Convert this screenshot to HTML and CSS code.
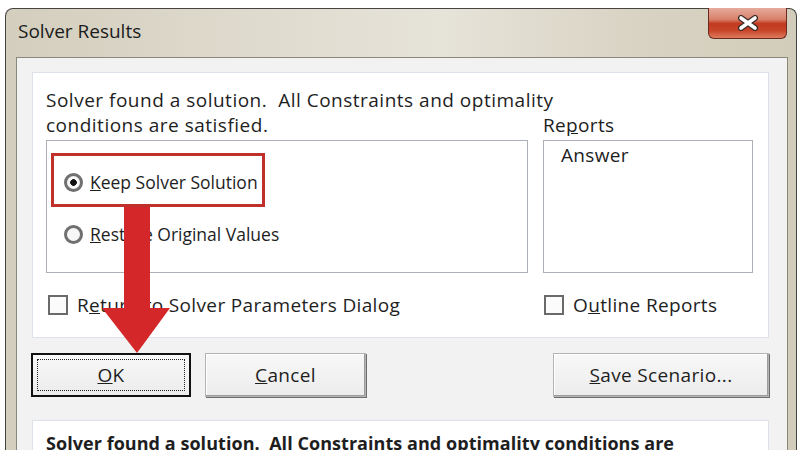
FILE: index.html
```html
<!DOCTYPE html>
<html lang="en">
<head>
<meta charset="utf-8">
<title>Solver Results</title>
<link rel="stylesheet" href="styles.css">
</head>
<body>
<div class="window">
  <div class="titlebar">
    <span class="title">Solver Results</span>
    <div class="close">
      <svg width="22" height="16" viewBox="0 0 22 16">
        <path d="M4 3 L18 13 M18 3 L4 13" stroke="#3a2a28" stroke-width="6" stroke-linecap="round"/>
        <path d="M4 3 L18 13 M18 3 L4 13" stroke="#ffffff" stroke-width="3.6" stroke-linecap="round"/>
      </svg>
    </div>
  </div>
  <div class="client">
    <div class="panel main">
      <div class="grid">
        <div class="message">Solver found a solution.&nbsp; All Constraints and optimality<br>conditions are satisfied.</div>
        <div class="reports-label">Re<u>p</u>orts</div>
        <div class="groupbox">
          <div class="highlight">
            <div class="option"><span class="radio checked"></span><span><u>K</u>eep Solver Solution</span></div>
          </div>
          <div class="option second"><span class="radio"></span><span><u>R</u>estore Original Values</span></div>
        </div>
        <div class="listbox"><div class="item">Answer</div></div>
        <div class="check left"><span class="box"></span><span>R<u>e</u>turn to Solver Parameters Dialog</span></div>
        <div class="check right"><span class="box"></span><span>O<u>u</u>tline Reports</span></div>
      </div>
    </div>
    <div class="buttons">
      <button class="btn default"><span class="focus"><u>O</u>K</span></button>
      <button class="btn cancel"><u>C</u>ancel</button>
      <button class="btn save"><u>S</u>ave Scenario...</button>
    </div>
    <div class="panel result">
      <p>Solver found a solution.&nbsp; All Constraints and optimality conditions are satisfied.</p>
    </div>
  </div>
  <svg class="arrow" width="68" height="146" viewBox="0 0 68 146">
    <rect x="22" y="0" width="26" height="102" fill="#d3272a"/>
    <polygon points="0,101 68,101 35,146" fill="#d3272a"/>
  </svg>
</div>
</body>
</html>
```
FILE: styles.css
```css
html, body {
  margin: 0;
  height: 100%;
}
body {
  background: #ffffff;
  font-family: "Open Sans", "Noto Sans", sans-serif;
  color: #1e1e1e;
  overflow: hidden;
}
.window {
  position: relative;
  box-sizing: border-box;
  margin: 8px 0 0 5px;
  width: 792px;
  height: 460px;
  padding: 0 8px 0 10px;
  border: 1px solid #45443f;
  border-bottom: none;
  border-radius: 8px 8px 0 0;
  background: linear-gradient(to right, #d3cebd 0%, #dedacd 30%, #e6e3d9 55%, #d8d3c3 80%, #d2ccba 100%);
}
.titlebar {
  height: 48px;
  display: flex;
  justify-content: space-between;
  align-items: flex-start;
}
.title {
  font-size: 19px;
  line-height: 26px;
  padding: 9px 0 0 2px;
  color: #1b1b1b;
}
.close {
  margin: -1px 1px 0 0;
  width: 79px;
  height: 31px;
  box-sizing: border-box;
  border: 1px solid #6a2a20;
  border-top: none;
  border-radius: 0 0 6px 6px;
  background: linear-gradient(to bottom, #e6ab9c 0%, #d8806a 38%, #c23a20 52%, #c8452a 75%, #de7a5c 100%);
  display: flex;
  align-items: center;
  justify-content: center;
}
.client {
  box-sizing: border-box;
  height: 420px;
  border: 1px solid #8a877d;
  border-bottom: none;
  background: #f2f2f2;
  padding: 14px 18px 0 15px;
}
.panel {
  background: #ffffff;
  border: 1px solid #dde2e8;
  box-sizing: border-box;
}
.main {
  height: 266px;
  padding: 15px 14px 0 13px;
}
.grid {
  display: grid;
  grid-template-columns: 482px 210px;
  column-gap: 15px;
  font-size: 19px;
  letter-spacing: 0.35px;
  line-height: 25px;
}
.message {
  white-space: nowrap;
  margin-bottom: 2px;
  letter-spacing: 0.5px;
}
.reports-label {
  align-self: end;
  margin-bottom: 2px;
}
.groupbox, .listbox {
  height: 133px;
  box-sizing: border-box;
  border: 1px solid #abb0b8;
}
.highlight {
  box-sizing: border-box;
  margin: 12px 0 0 4px;
  width: 214px;
  height: 54px;
  border: 3px solid #c1312c;
  padding: 4px 0 0 10px;
  display: flex;
  align-items: center;
  white-space: nowrap;
}
.option {
  display: flex;
  align-items: center;
  gap: 7px;
  white-space: nowrap;
  font-size: 17.5px;
  letter-spacing: 0;
}
.option.second {
  margin: 15px 0 0 17px;
}
.radio {
  flex: none;
  width: 19px;
  height: 19px;
  box-sizing: border-box;
  border: 3px solid #707070;
  border-radius: 50%;
  background: #f7f7f7;
}
.radio.checked {
  background: radial-gradient(circle, #111 0 3px, #f7f7f7 3.6px);
}
.listbox {
  padding: 2px 17px;
}
.check {
  display: flex;
  align-items: center;
  gap: 9px;
  margin-top: 22px;
  height: 20px;
  white-space: nowrap;
}
.check.left { margin-left: 2px; }
.check.right { margin-left: 1px; }
.box {
  flex: none;
  width: 20px;
  height: 20px;
  box-sizing: border-box;
  border: 2px solid #6a6a6a;
  background: #fbfbfb;
}
.buttons {
  display: flex;
  margin-top: 15px;
  height: 44px;
}
.btn {
  box-sizing: border-box;
  height: 44px;
  font-family: inherit;
  font-size: 19px;
  letter-spacing: 0.35px;
  color: #1e1e1e;
  background: linear-gradient(to bottom, #f8f8f8, #ececec);
  border: 1px solid #b4b4b4;
  box-shadow: 1px 1px 0 #6e6e6e, inset -1px -1px 0 #9c9c9c, inset 1px 1px 0 #ffffff;
  padding: 0;
}
.default {
  margin-left: -1px;
  width: 160px;
  border: 2px solid #111;
  box-shadow: none;
  padding: 4px;
  display: flex;
}
.focus {
  flex: 1;
  border: 1px dotted #222;
  display: flex;
  align-items: center;
  justify-content: center;
}
.cancel {
  margin-left: 14px;
  width: 161px;
}
.save {
  margin-left: auto;
  width: 216px;
}
.result {
  margin-top: 23px;
  height: 60px;
  padding: 10px 13px;
}
.result p {
  margin: 0;
  font-size: 18px;
  letter-spacing: 0.05px;
  line-height: 25px;
  font-weight: bold;
}
.arrow {
  position: absolute;
  left: 96px;
  top: 198px;
}
```
